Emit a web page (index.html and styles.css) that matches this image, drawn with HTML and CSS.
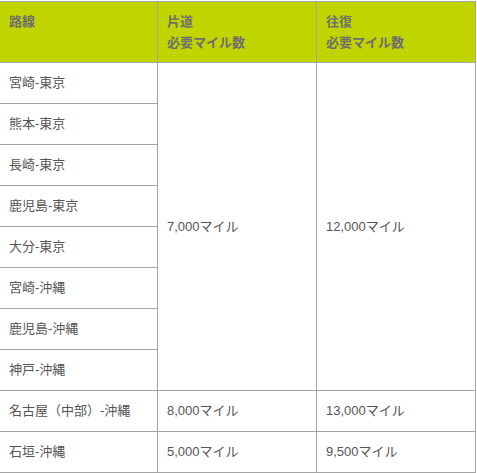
FILE: index.html
```html
<!DOCTYPE html>
<html lang="ja">
<head>
<meta charset="utf-8">
<link rel="stylesheet" href="styles.css">
</head>
<body>
<table class="miles">
  <colgroup>
    <col class="c1"><col class="c2"><col class="c3">
  </colgroup>
  <thead>
    <tr>
      <th>路線</th>
      <th>片道<br>必要マイル数</th>
      <th>往復<br>必要マイル数</th>
    </tr>
  </thead>
  <tbody>
    <tr><td>宮崎-東京</td><td rowspan="8">7,000マイル</td><td rowspan="8">12,000マイル</td></tr>
    <tr><td>熊本-東京</td></tr>
    <tr><td>長崎-東京</td></tr>
    <tr><td>鹿児島-東京</td></tr>
    <tr><td>大分-東京</td></tr>
    <tr><td>宮崎-沖縄</td></tr>
    <tr><td>鹿児島-沖縄</td></tr>
    <tr><td>神戸-沖縄</td></tr>
    <tr><td>名古屋（中部）-沖縄</td><td>8,000マイル</td><td>13,000マイル</td></tr>
    <tr><td>石垣-沖縄</td><td>5,000マイル</td><td>9,500マイル</td></tr>
  </tbody>
</table>
</body>
</html>
```
FILE: styles.css
```css
html, body {
  margin: 0;
  padding: 0;
  background: #ffffff;
}
body {
  font-family: "Liberation Sans", "Noto Sans CJK JP", sans-serif;
  font-size: 13px;
  color: #555555;
  overflow: hidden;
}
.miles {
  border-collapse: collapse;
  table-layout: fixed;
  width: 477px;
  margin: 1px 0 0 -1px;
}
.c1 { width: 158px; }
.c2 { width: 159px; }
.c3 { width: 159px; }
.miles th,
.miles td {
  border: 1px solid #a5a5a5;
  text-align: left;
  padding: 0 9px;
}
.miles th {
  background: #c0d400;
  color: #6f6f6f;
  font-weight: bold;
  line-height: 21px;
  height: 60px;
  padding-top: 9px;
  padding-bottom: 9px;
  vertical-align: top;
  box-sizing: border-box;
}
.miles td {
  line-height: 20px;
  height: 40px;
  padding-top: 10px;
  padding-bottom: 10px;
  vertical-align: middle;
  box-sizing: border-box;
}
.miles th:not(:first-child),
.miles td[rowspan],
.miles tr td + td {
  padding-left: 9px;
}
```
